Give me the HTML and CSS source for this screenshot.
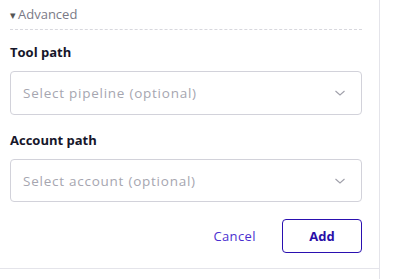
FILE: index.html
```html
<!DOCTYPE html>
<html>
<head>
<meta charset="utf-8">
<link rel="stylesheet" href="styles.css">
</head>
<body>
<div class="page">
  <div class="panel">
    <div class="advanced"><span class="tri">▾</span>Advanced</div>
    <div class="field">
      <div class="label">Tool path</div>
      <div class="select">
        <span class="placeholder">Select pipeline (optional)</span>
        <svg class="chev" width="12" height="8" viewBox="0 0 12 8"><path d="M1.5 2 L6 6 L10.5 2" fill="none" stroke="#a0a0aa" stroke-width="1.1"/></svg>
      </div>
    </div>
    <div class="field">
      <div class="label">Account path</div>
      <div class="select">
        <span class="placeholder">Select account (optional)</span>
        <svg class="chev" width="12" height="8" viewBox="0 0 12 8"><path d="M1.5 2 L6 6 L10.5 2" fill="none" stroke="#a0a0aa" stroke-width="1.1"/></svg>
      </div>
    </div>
    <div class="actions">
      <button class="cancel">Cancel</button>
      <button class="add">Add</button>
    </div>
  </div>
</div>
</body>
</html>
```
FILE: styles.css
```css
html, body { margin: 0; padding: 0; background: #fff; }
body { font-family: "Open Sans", "Liberation Sans", sans-serif; }
.page { width: 380px; height: 279px; border-right: 1px solid #e4e4ea; box-sizing: border-box; }
.panel {
  height: 269px;
  box-sizing: border-box;
  border-bottom: 1px solid #e4e4ea;
  padding: 0 17px 0 10px;
}
.advanced {
  height: 30px;
  box-sizing: border-box;
  padding-top: 5px;
  font-size: 13px;
  line-height: 18px;
  color: #7a7a86;
  border-bottom: 1px dashed #d8d8de;
}
.tri { font-size: 11px; margin-right: 2px; color: #555; }
.field { display: flex; flex-direction: column; }
.label {
  font-size: 13px;
  font-weight: 700;
  color: #16162a;
  line-height: 18px;
  margin-top: 13px;
  margin-bottom: 10px;
}
.field + .field .label { margin-top: 16px; }
.select {
  height: 44px;
  box-sizing: border-box;
  border: 1px solid #d2d2da;
  border-radius: 4px;
  display: flex;
  align-items: center;
  justify-content: space-between;
  padding: 0 15px 0 12px;
}
.field + .field .select { height: 43px; }
.placeholder { font-size: 13.5px; letter-spacing: 0.75px; color: #a6a6b0; }
.actions { display: flex; justify-content: flex-end; align-items: center; margin-top: 17px; gap: 26px; }
button { font-family: inherit; font-size: 13px; cursor: pointer; background: none; }
.cancel { border: none; color: #4a2fd0; padding: 0; letter-spacing: 0.4px; }
.add {
  width: 80px; height: 34px;
  border: 1.5px solid #2a10b0;
  border-radius: 4px;
  color: #2a0fa8;
  font-weight: 700;
}
```
